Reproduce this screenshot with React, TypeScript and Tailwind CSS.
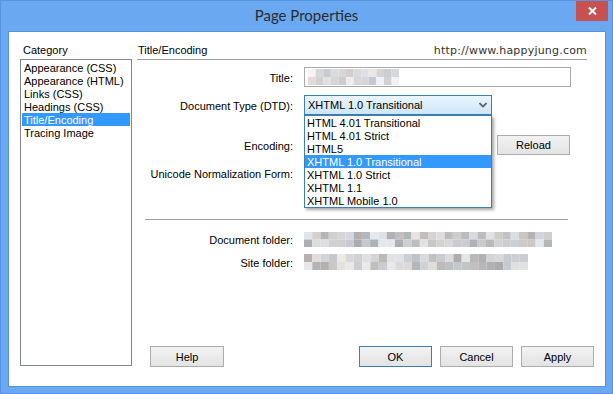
import React from "react";

function noiseColors(seed: number, n: number, light = false): string[] {
  const out: string[] = [];
  let s = seed;
  for (let i = 0; i < n; i++) {
    s = (s * 9301 + 49297) % 233280;
    const r = s / 233280;
    let v = light ? 200 + Math.floor(r * 50) : 170 + Math.floor(r * 70);
    if (r > 0.9) v -= 30;
    const tint = Math.floor(((s >> 3) % 9) - 4);
    const c = (x: number) => Math.max(0, Math.min(255, x)).toString(16).padStart(2, "0");
    out.push(`#${c(v + tint)}${c(v)}${c(v - tint + 2)}`);
  }
  return out;
}

function Pixels({ cols, rows, cw, ch, seed, light }: { cols: number; rows: number; cw: number; ch: number; seed: number; light?: boolean }) {
  const colors = noiseColors(seed, cols * rows, light);
  return (
    <svg width={cols * cw} height={rows * ch} className="block">
      {colors.map((c, i) => (
        <rect key={i} x={(i % cols) * cw} y={Math.floor(i / cols) * ch} width={cw} height={ch} fill={c} />
      ))}
    </svg>
  );
}

const categories = [
  "Appearance (CSS)",
  "Appearance (HTML)",
  "Links (CSS)",
  "Headings (CSS)",
  "Title/Encoding",
  "Tracing Image",
];

const dtds = [
  "HTML 4.01 Transitional",
  "HTML 4.01 Strict",
  "HTML5",
  "XHTML 1.0 Transitional",
  "XHTML 1.0 Strict",
  "XHTML 1.1",
  "XHTML Mobile 1.0",
];

function Btn({ children, w, primary }: { children: React.ReactNode; w: string; primary?: boolean }) {
  return (
    <div
      className={`${w} h-[21px] flex items-center justify-center pt-[1px] border bg-gradient-to-b from-[#f2f2f2] to-[#e3e3e3] ${
        primary ? "border-[#3c7fb1]" : "border-[#acacac]"
      }`}
    >
      {children}
    </div>
  );
}

export default function App() {
  return (
    <div className="w-[613px] h-[394px] bg-[#6aa9f2] border border-[#5793e0] flex flex-col font-['Liberation_Sans',Arial,sans-serif] text-[11px] text-black leading-[13px]">
      {/* Title bar */}
      <div className="h-[30px] relative flex items-center justify-center">
        <span className="font-['Lato',sans-serif] text-[15px] text-[#2b2b2b] leading-none pb-[1px]">Page Properties</span>
        <div className="absolute right-[4px] top-0 w-[32px] h-[20px] bg-[#c75050] flex items-center justify-center">
          <svg width="9" height="8" viewBox="0 0 9 8">
            <path d="M1 0.5 L8 7.5 M8 0.5 L1 7.5" stroke="white" strokeWidth="2" />
          </svg>
        </div>
      </div>

      {/* Client area */}
      <div className="ml-[7px] mr-[6px] mb-[6px] flex-1 bg-white border border-[#5a92d8] flex pt-[9px] pl-[11px] pb-[19px]">
        {/* Category column */}
        <div className="w-[112px] flex flex-col">
          <div className="h-[18px] flex items-center pl-[3px]">Category</div>
          <div className="h-[307px] border border-[#828790] pt-[1px] px-[1px]">
            {categories.map((c) => (
              <div
                key={c}
                className={`h-[13px] pl-[2px] leading-[14px] ${c === "Title/Encoding" ? "bg-[#3399ff] text-white" : ""}`}
              >
                {c}
              </div>
            ))}
          </div>
        </div>

        {/* Right pane */}
        <div className="flex-1 ml-[5px] flex flex-col">
          <div className="w-[450px] h-[19px] border-b border-[#a0a0a0] flex items-center justify-between pl-[1px]">
            <span>Title/Encoding</span>
            <span className="font-['DejaVu_Sans',sans-serif] text-[11px] tracking-[0.2px] text-[#333]">http://www.happyjung.com</span>
          </div>

          {/* Title */}
          <div className="mt-[7px] h-[20px] flex items-center">
            <div className="w-[156px] text-right pt-[2px]">Title:</div>
            <div className="ml-[11px] w-[267px] h-[20px] border border-[#a9a9a9] flex items-center pl-[3px]">
              <Pixels cols={12} rows={2} cw={7.6} ch={8} seed={17} light />
            </div>
          </div>

          {/* DTD */}
          <div className="mt-[8px] h-[20px] flex items-center">
            <div className="w-[156px] text-right pt-[2px]">Document Type (DTD):</div>
            <div className="ml-[11px] w-[188px] h-[20px] relative">
              <div className="w-full h-full border border-[#3c7fb1] bg-gradient-to-b from-[#eaf5fd] to-[#cde6fa] flex items-center pl-[3px] justify-between pr-[4px]">
                <span className="pt-[1px]">XHTML 1.0 Transitional</span>
                <svg width="8" height="6" viewBox="0 0 8 6">
                  <path d="M0.5 1 L4 4.5 L7.5 1" fill="none" stroke="#555" strokeWidth="1.6" />
                </svg>
              </div>
              <div className="absolute left-0 top-full w-[188px] border border-[#3c7fb1] bg-white z-10 shadow-[2px_2px_3px_rgba(0,0,0,0.35)]">
                {dtds.map((d) => (
                  <div
                    key={d}
                    className={`h-[13px] leading-[14px] pl-[2px] ${d === "XHTML 1.0 Transitional" ? "bg-[#3399ff] text-white" : ""}`}
                  >
                    {d}
                  </div>
                ))}
              </div>
            </div>
          </div>

          {/* Encoding */}
          <div className="mt-[20px] h-[20px] flex items-center">
            <div className="w-[156px] text-right pt-[2px]">Encoding:</div>
            <div className="ml-[11px] w-[188px] h-[20px] border border-[#acacac] bg-[#f0f0f0]" />
            <div className="ml-[5px] w-[73px] h-[20px] border border-[#acacac] bg-gradient-to-b from-[#f2f2f2] to-[#e3e3e3] flex items-center justify-center pt-[1px]">
              Reload
            </div>
          </div>

          {/* Unicode */}
          <div className="mt-[8px] h-[20px] flex items-center">
            <div className="w-[156px] text-right pt-[2px]">Unicode Normalization Form:</div>
          </div>

          <div className="mt-[36px] ml-[8px] w-[423px] h-px bg-[#a0a0a0]" />

          {/* Document folder */}
          <div className="mt-[12px] h-[15px] flex items-center">
            <div className="w-[156px] text-right pt-[2px]">Document folder:</div>
            <div className="ml-[11px]">
              <Pixels cols={30} rows={2} cw={8.27} ch={7.5} seed={41} />
            </div>
          </div>

          {/* Site folder */}
          <div className="mt-[7px] h-[16px] flex items-center">
            <div className="w-[156px] text-right pt-[2px]">Site folder:</div>
            <div className="ml-[11px]">
              <Pixels cols={27} rows={2} cw={8.3} ch={8} seed={73} />
            </div>
          </div>

          <div className="flex-1" />

          {/* Buttons */}
          <div className="flex items-center pl-[13px] pr-[11px]">
            <Btn w="w-[74px]">Help</Btn>
            <div className="flex-1" />
            <Btn w="w-[73px]" primary>OK</Btn>
            <div className="w-[8px]" />
            <Btn w="w-[73px]">Cancel</Btn>
            <div className="w-[8px]" />
            <Btn w="w-[73px]">Apply</Btn>
          </div>
        </div>
      </div>
    </div>
  );
}
